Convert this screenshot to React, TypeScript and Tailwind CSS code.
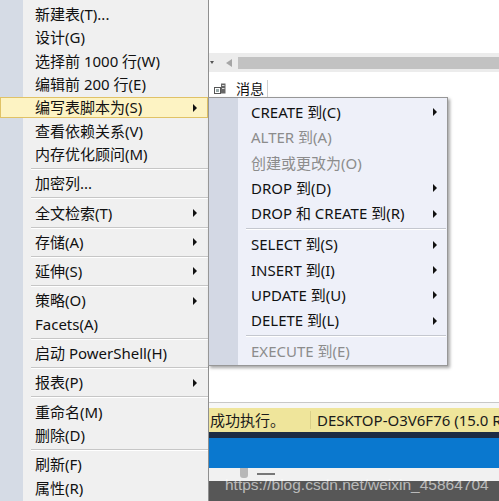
import React from "react";

type Item =
  | { sep: true }
  | { label: string; sub?: boolean; hot?: boolean; off?: boolean };

const mainItems: Item[] = [
  { label: "新建表(T)..." },
  { label: "设计(G)" },
  { label: "选择前 1000 行(W)" },
  { label: "编辑前 200 行(E)" },
  { label: "编写表脚本为(S)", sub: true, hot: true },
  { label: "查看依赖关系(V)" },
  { label: "内存优化顾问(M)" },
  { sep: true },
  { label: "加密列..." },
  { sep: true },
  { label: "全文检索(T)", sub: true },
  { sep: true },
  { label: "存储(A)", sub: true },
  { sep: true },
  { label: "延伸(S)", sub: true },
  { sep: true },
  { label: "策略(O)", sub: true },
  { label: "Facets(A)" },
  { sep: true },
  { label: "启动 PowerShell(H)" },
  { sep: true },
  { label: "报表(P)", sub: true },
  { sep: true },
  { label: "重命名(M)" },
  { label: "删除(D)" },
  { sep: true },
  { label: "刷新(F)" },
  { label: "属性(R)" },
];

const subItems: Item[] = [
  { label: "CREATE 到(C)", sub: true },
  { label: "ALTER 到(A)", off: true },
  { label: "创建或更改为(O)", off: true },
  { label: "DROP 到(D)", sub: true },
  { label: "DROP 和 CREATE 到(R)", sub: true },
  { sep: true },
  { label: "SELECT 到(S)", sub: true },
  { label: "INSERT 到(I)", sub: true },
  { label: "UPDATE 到(U)", sub: true },
  { label: "DELETE 到(L)", sub: true },
  { sep: true },
  { label: "EXECUTE 到(E)", off: true },
];

function Arrow() {
  return (
    <span className="h-0 w-0 border-y-[4px] border-l-[4px] border-y-transparent border-l-[#111]" />
  );
}

function MainMenu() {
  return (
    <div className="relative z-10 flex h-full w-[209px] shrink-0 flex-col border-r border-[#8f8f8f] bg-[linear-gradient(to_right,#d5dbe5_23px,#f0f0f0_23px)] pt-[2.3px]">
      {mainItems.map((it, i) =>
        "sep" in it ? (
          <div key={i} className="flex h-[5.9px] shrink-0 items-center pl-[31px]">
            <div className="h-[2px] w-full border-t border-b border-t-[#c6c6c6] border-b-white" />
          </div>
        ) : it.hot ? (
          <div key={i} className="h-[23.4px] shrink-0 py-[1px]">
            <div className="flex h-full items-center justify-between border border-[#e0c266] bg-[#fdf3c3] pl-[34px] pr-[10px]">
              <span>{it.label}</span>
              <Arrow />
            </div>
          </div>
        ) : (
          <div
            key={i}
            className="flex h-[23.4px] shrink-0 items-center justify-between pl-[35px] pr-[11px]"
          >
            <span>{it.label}</span>
            {it.sub && <Arrow />}
          </div>
        )
      )}
    </div>
  );
}

function SubMenu() {
  return (
    <div className="absolute left-[208px] top-[97px] z-20 w-[240px] border border-[#979797] bg-[linear-gradient(to_right,#d3d8e4_29px,#eef0f9_29px)] pb-[1px] pt-[1.3px] shadow-[2px_2px_3px_rgba(0,0,0,0.35)]">
      {subItems.map((it, i) =>
        "sep" in it ? (
          <div key={i} className="flex h-[5.6px] items-center pl-[37px] pr-[1px]">
            <div className="h-[2px] w-full border-t border-b border-t-[#c4c7cf] border-b-white" />
          </div>
        ) : (
          <div
            key={i}
            className={`flex h-[25.4px] items-center justify-between pl-[42px] pr-[10px] ${
              it.off ? "text-[#8c8c8c]" : "text-[#111]"
            }`}
          >
            <span>{it.label}</span>
            {it.sub && <Arrow />}
          </div>
        )
      )}
    </div>
  );
}

export default function App() {
  return (
    <div className="relative flex h-[501px] w-[499px] overflow-hidden bg-white font-['Noto_Sans','Noto_Sans_CJK_SC',sans-serif] text-[15px] text-[#111]">
      <MainMenu />

      <div className="flex min-w-0 flex-1 flex-col">
        <div className="h-[53px] shrink-0 bg-white" />

        {/* horizontal scroll bar */}
        <div className="flex h-[19px] shrink-0 items-center bg-[#ececec]">
          <span className="ml-[1px] h-0 w-0 border-x-[2px] border-t-[3px] border-x-transparent border-t-[#555]" />
          <span className="ml-[12px] h-0 w-0 border-y-[4px] border-r-[6px] border-y-transparent border-r-[#a6a6a6]" />
          <div className="ml-[6px] h-[12px] flex-1 bg-[#c2c2c2]" />
        </div>

        <div className="h-[8px] shrink-0 bg-white" />

        {/* results tab */}
        <div className="flex h-[17px] shrink-0 items-stretch bg-white">
          <div className="flex w-[59px] items-center gap-[10px] border-r border-[#cfcfcf] pl-[5px] text-[14px] leading-none">
            <svg width="12" height="11" viewBox="0 0 12 11" className="shrink-0">
              <rect x="0.5" y="4.5" width="6" height="6" fill="none" stroke="#555" />
              <rect x="2" y="6" width="3" height="3" fill="#9aa" />
              <rect x="7" y="0.5" width="4.5" height="10" fill="#666" />
              <rect x="8" y="2" width="2.5" height="1" fill="#ddd" />
              <rect x="8" y="5" width="2.5" height="1" fill="#ddd" />
            </svg>
            <span>消息</span>
          </div>
        </div>

        <div className="min-h-0 flex-1 bg-white" />

        <div className="h-px shrink-0 bg-[#c8c8c8]" />
        <div className="h-[5px] shrink-0 bg-[#f7f7f7]" />

        {/* status bar */}
        <div className="flex h-[24px] shrink-0 items-center bg-[#efe59b] text-[15px] text-[#1a1a1a]">
          <span className="w-[101px] shrink-0 pl-[1px]">成功执行。</span>
          <span className="h-[18px] w-px shrink-0 bg-[#d9cf88]" />
          <span className="ml-[6px] whitespace-nowrap">DESKTOP-O3V6F76 (15.0 RTM)</span>
        </div>

        <div className="h-[6px] shrink-0 bg-[#1d2c44]" />
        <div className="h-[30px] shrink-0 bg-[#0a78cf]" />

        <div className="relative h-[13px] shrink-0 bg-[#f1f1f1]">
          <div className="absolute left-[31px] top-0 h-[10px] w-[8px] rounded-b-[3px] bg-[#b8b8b8]" />
          <div className="absolute left-[48px] top-[5px] h-[2px] w-[18px] bg-[#777]" />
        </div>
        <div className="h-[20px] shrink-0 bg-[#575757]" />
      </div>

      <SubMenu />

      {/* watermark */}
      <div className="pointer-events-none absolute left-[225px] top-[473px] z-30 whitespace-nowrap font-['Liberation_Sans',sans-serif] text-[15.5px] text-white/60">
        https://blog.csdn.net/weixin_45864704
      </div>
    </div>
  );
}
